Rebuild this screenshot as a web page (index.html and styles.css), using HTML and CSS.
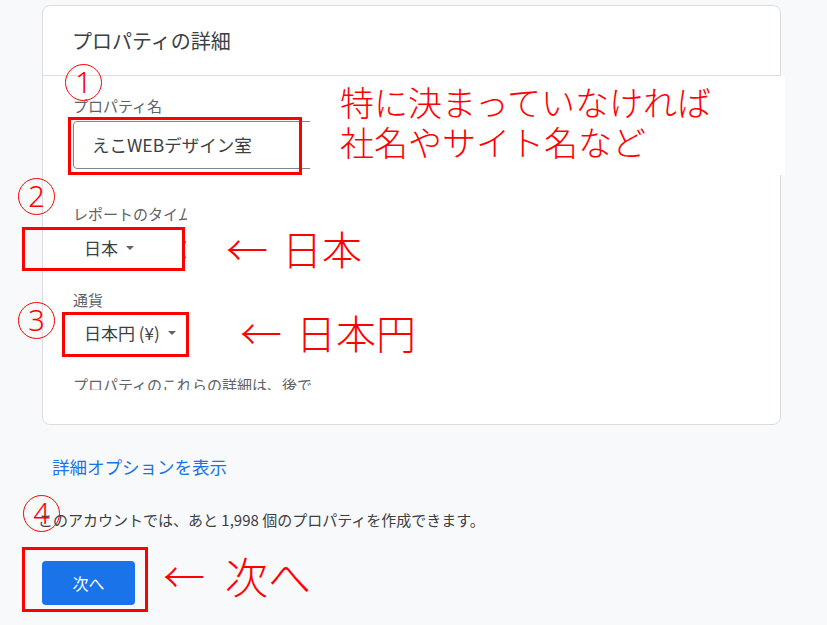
FILE: index.html
```html
<!DOCTYPE html>
<html lang="ja">
<head>
<meta charset="utf-8">
<title>プロパティの詳細</title>
<link rel="stylesheet" href="styles.css">
</head>
<body>
<div class="page">
  <section class="card">
    <div class="card-head">プロパティの詳細</div>
    <div class="card-body">
      <div class="field">
        <div class="lbl">プロパティ名</div>
        <div class="input">えこWEBデザイン室</div>
      </div>
      <div class="field tz">
        <div class="tz-clip">
          <div class="lbl">レポートのタイムゾーン</div>
          <div class="row">
            <span class="select tz-select">日本<span class="caret"></span></span>
            <span class="tz-text">(GMT+09:00) 日本時間</span>
          </div>
        </div>
      </div>
      <div class="field cur">
        <div class="lbl">通貨</div>
        <div class="row"><span class="select">日本円 (¥)<span class="caret"></span></span></div>
      </div>
      <div class="desc">プロパティのこれらの詳細は、後で［管理］で編集できます。</div>
    </div>
  </section>
  <a class="more">詳細オプションを表示</a>
  <p class="quota">このアカウントでは、あと 1,998 個のプロパティを作成できます。</p>
  <button class="next">次へ</button>
</div>

<div class="note">特に決まっていなければ<br>社名やサイト名など</div>
<div class="mark m1">1</div>
<div class="mark m2">2</div>
<div class="mark m3">3</div>
<div class="mark m4">4</div>
<div class="rbox b1"></div>
<div class="rbox b2"></div>
<div class="rbox b3"></div>
<div class="rbox b4"></div>
<div class="arrow a1"><span class="ar">←</span><span>日本</span></div>
<div class="arrow a2"><span class="ar">←</span><span>日本円</span></div>
<div class="arrow a3"><span class="ar">←</span><span>次へ</span></div>
</body>
</html>
```

FILE: styles.css
```css
html, body {
  margin: 0;
  padding: 0;
}
body {
  background: #f8f9fa;
  font-family: "Noto Sans CJK JP", "Noto Sans", sans-serif;
  color: #3c4043;
  width: 827px;
  height: 625px;
  overflow: hidden;
  position: relative;
}
.page {
  padding: 5px 0 0 40px;
  display: flex;
  flex-direction: column;
  align-items: flex-start;
}
.card {
  margin-left: 2px;
  width: 739px;
  height: 420px;
  box-sizing: border-box;
  background: #fff;
  border: 1px solid #dadce0;
  border-radius: 8px;
}
.card-head {
  height: 69px;
  line-height: 69px;
  border-bottom: 1px solid #dadce0;
  padding-left: 29px;
  font-size: 20px;
  color: #3c4043;
}
.card-body {
  padding: 20px 30px 0 30px;
}
.lbl {
  font-size: 15px;
  line-height: 20px;
  color: #5f6368;
  white-space: nowrap;
}
.input {
  margin-top: 5px;
  height: 48px;
  box-sizing: border-box;
  border: 1px solid #80868b;
  border-radius: 4px;
  padding-left: 18px;
  font-size: 17.5px;
  line-height: 46px;
  color: #3c4043;
}
.tz {
  margin-top: 35px;
}
.tz-clip {
  width: 114px;
  overflow: hidden;
}
.row {
  margin-top: 4px;
  height: 40px;
  line-height: 40px;
  padding-left: 11px;
  display: flex;
  white-space: nowrap;
  font-size: 17px;
  color: #3c4043;
}
.select {
  display: inline-flex;
  align-items: center;
}
.tz-select {
  width: 97px;
  flex: none;
}
.caret {
  display: inline-block;
  width: 0;
  height: 0;
  margin-left: 8px;
  border-left: 4px solid transparent;
  border-right: 4px solid transparent;
  border-top: 4px solid #5f6368;
}
.cur {
  margin-top: 22px;
}
.cur .row {
  margin-top: 3px;
}
.desc {
  margin-top: 22px;
  width: 243px;
  height: 15px;
  overflow: hidden;
  font-size: 15px;
  line-height: 20px;
  color: #5f6368;
  white-space: nowrap;
}
.more {
  margin: 30px 0 0 12px;
  font-size: 17.5px;
  line-height: 24px;
  color: #1a73e8;
}
.quota {
  margin: 31px 0 0 -2px;
  font-size: 15px;
  line-height: 20px;
  color: #3c4043;
  white-space: nowrap;
}
.next {
  margin: 31px 0 0 2px;
  width: 93px;
  height: 44px;
  border: none;
  border-radius: 4px;
  background: #1a73e8;
  color: #fff;
  font-family: "Noto Sans CJK JP", "Noto Sans", sans-serif;
  font-size: 16px;
  padding: 0;
}

/* annotations */
.note {
  position: absolute;
  left: 310px;
  top: 76px;
  width: 445px;
  height: 93px;
  padding: 6px 0 0 30px;
  background: #fff;
  color: #ff0000;
  font-size: 34px;
  font-weight: 300;
  line-height: 40px;
  white-space: nowrap;
}
.mark {
  position: absolute;
  width: 37px;
  height: 37px;
  box-sizing: border-box;
  border: 1.5px solid #ff0000;
  border-radius: 50%;
  color: #ff0000;
  font-family: "Noto Sans", sans-serif;
  font-weight: 300;
  font-size: 29px;
  line-height: 34px;
  text-align: center;
}
.m1 { left: 65px; top: 64px; }
.m2 { left: 18px; top: 178px; }
.m3 { left: 18px; top: 302px; }
.m4 { left: 23px; top: 495px; }
.rbox {
  position: absolute;
  box-sizing: border-box;
  border: 3px solid #ff0000;
}
.b1 { left: 68px; top: 117px; width: 234px; height: 58px; }
.b2 { left: 22px; top: 227px; width: 163px; height: 44px; }
.b3 { left: 62px; top: 312px; width: 127px; height: 45px; }
.b4 { left: 22px; top: 547px; width: 126px; height: 65px; }
.arrow {
  position: absolute;
  display: flex;
  align-items: center;
  gap: 14px;
  color: #ff0000;
  font-size: 40px;
  font-weight: 300;
  line-height: 44px;
  white-space: nowrap;
}
.arrow .ar {
  font-size: 42px;
}
.a1 { left: 226px; top: 226px; }
.a2 { left: 240px; top: 310px; }
.a3 { left: 163px; top: 553px; gap: 20px; font-size: 43px; }
```
